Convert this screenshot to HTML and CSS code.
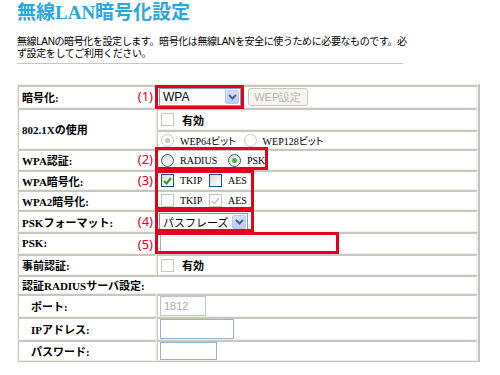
FILE: index.html
```html
<!DOCTYPE html>
<html lang="ja">
<head>
    <meta charset="UTF-8">
    <meta name="viewport" content="width=device-width, initial-scale=1.0">
    <title>無線LAN暗号化設定</title>
    <link rel="stylesheet" href="styles.css">
</head>
<body>
    <h1 class="title">無線LAN暗号化設定</h1>
    <p class="intro">無線LANの暗号化を設定します。暗号化は無線LANを安全に使うために必要なものです。必<br>ず設定をしてご利用ください。</p>
    <div class="rule"></div>

    <div class="form-wrap">
        <table class="settings">
            <colgroup>
                <col class="col-label">
                <col>
            </colgroup>
            <tr class="h23">
                <th>暗号化: <span class="num">(1)</span></th>
                <td>
                    <span class="select sel-wpa"><span class="select-text">WPA</span><span class="select-btn"><svg width="9" height="6" viewBox="0 0 9 6"><path d="M1 1 L4.5 4.5 L8 1" fill="none" stroke="#4d6185" stroke-width="2"/></svg></span></span>
                    <span class="btn-off">WEP設定</span>
                </td>
            </tr>
            <tr class="h22">
                <th rowspan="2">802.1Xの使用</th>
                <td><span class="chk off"></span><b class="opt-b">有効</b></td>
            </tr>
            <tr class="h19">
                <td>
                    <span class="radio off on"></span><span class="opt opt-w">WEP64ビット</span>
                    <span class="radio off"></span><span class="opt">WEP128ビット</span>
                </td>
            </tr>
            <tr class="h21">
                <th>WPA認証: <span class="num">(2)</span></th>
                <td>
                    <span class="radio"></span><span class="opt">RADIUS</span>
                    <span class="radio on"></span><span class="opt">PSK</span>
                </td>
            </tr>
            <tr class="h20">
                <th>WPA暗号化: <span class="num">(3)</span></th>
                <td>
                    <span class="chk"><svg width="9" height="8" viewBox="0 0 9 8"><path d="M1 4 L3.5 6.5 L8 1" fill="none" stroke="#21a121" stroke-width="2"/></svg></span><span class="opt opt-s">TKIP</span>
                    <span class="chk"></span><span class="opt opt-s">AES</span>
                </td>
            </tr>
            <tr class="h20">
                <th>WPA2暗号化:</th>
                <td>
                    <span class="chk off"></span><span class="opt opt-s">TKIP</span>
                    <span class="chk off"><svg width="9" height="8" viewBox="0 0 9 8"><path d="M1 4 L3.5 6.5 L8 1" fill="none" stroke="#c8c7bc" stroke-width="1.5"/></svg></span><span class="opt opt-s">AES</span>
                </td>
            </tr>
            <tr class="h22">
                <th>PSKフォーマット: <span class="num">(4)</span></th>
                <td>
                    <span class="select sel-psk"><span class="select-text jp">パスフレーズ</span><span class="select-btn"><svg width="9" height="6" viewBox="0 0 9 6"><path d="M1 1 L4.5 4.5 L8 1" fill="none" stroke="#4d6185" stroke-width="2"/></svg></span></span>
                </td>
            </tr>
            <tr class="h22">
                <th>PSK: <span class="num">(5)</span></th>
                <td><input class="field psk" type="text"></td>
            </tr>
            <tr class="h21">
                <th>事前認証:</th>
                <td><span class="chk off"></span><b class="opt-b">有効</b></td>
            </tr>
            <tr class="h17">
                <th colspan="2">認証RADIUSサーバ設定:</th>
            </tr>
            <tr class="h23">
                <th class="sub">ポート:</th>
                <td><input class="field port" type="text" value="1812" disabled></td>
            </tr>
            <tr class="h23">
                <th class="sub">IPアドレス:</th>
                <td><input class="field ip" type="text"></td>
            </tr>
            <tr class="h21">
                <th class="sub">パスワード:</th>
                <td><input class="field pass" type="password"></td>
            </tr>
        </table>

        <!-- 注釈の赤枠 -->
        <div class="mark m1"></div>
        <div class="mark m2"></div>
        <div class="mark m3"></div>
        <div class="mark m4"></div>
        <div class="mark m5"></div>
    </div>
</body>
</html>
```

FILE: styles.css
```css
body {
    margin: 0;
    padding: 0 17px;
    font-family: "Liberation Serif", "Noto Sans CJK JP", serif;
    color: #000;
    background: #fff;
}
.title {
    margin: 0;
    padding-top: 1px;
    font-size: 19px;
    line-height: 24px;
    font-weight: bold;
    color: #2aa7de;
}
.intro {
    margin: 11px 0 0;
    font-family: "Liberation Sans", "Noto Sans CJK JP", sans-serif;
    font-size: 10px;
    line-height: 12px;
    letter-spacing: -0.4px;
}
.rule {
    width: 386px;
    height: 1px;
    margin-top: 3px;
    background: #c8c8c0;
}
.form-wrap {
    position: relative;
    width: 463px;
    margin-top: 20px;
}
.settings {
    width: 463px;
    table-layout: fixed;
    border-collapse: separate;
    border-spacing: 0;
    border: 1px solid;
    border-color: #f1f0e9 #c4c3bb #c4c3bb #f1f0e9;
    border-right-width: 2px;
}
.col-label {
    width: 139px;
}
.settings th,
.settings td {
    padding: 0;
    border-top: 2px solid #c8c7bf;
    border-bottom: 1px solid #f1f0e9;
    border-left: 1px solid #c8c7bf;
    border-right: 2px solid #f1f0e9;
    background: #fff;
    vertical-align: middle;
    font-size: 11px;
    white-space: nowrap;
}
.settings th {
    padding-left: 3px;
    text-align: left;
    font-weight: bold;
}
.settings td {
    padding-left: 1px;
}
.settings th.sub {
    padding-left: 12px;
}
.h17 { height: 17px; }
.h19 { height: 19px; }
.h20 { height: 20px; }
.h21 { height: 21px; }
.h22 { height: 22px; }
.h23 { height: 23px; }

.num {
    float: right;
    margin-right: 2px;
    font-family: "Noto Sans", sans-serif;
    font-weight: normal;
    font-size: 13px;
    line-height: 14px;
    color: #e50020;
}

/* セレクト */
.select {
    display: inline-flex;
    align-items: stretch;
    height: 18px;
    box-sizing: border-box;
    border: 1px solid #7f9db9;
    background: #fff;
    vertical-align: middle;
}
.sel-wpa { width: 82px; }
.sel-psk { width: 89px; }
.select-text {
    flex: 1;
    padding-left: 3px;
    font-family: "Liberation Sans", sans-serif;
    font-size: 12px;
    line-height: 16px;
}
.select-text.jp {
    font-family: "Noto Sans CJK JP", sans-serif;
    font-size: 11px;
}
.select-btn {
    display: flex;
    align-items: center;
    justify-content: center;
    width: 14px;
    margin: 1px;
    border-radius: 2px;
    background: linear-gradient(#d6e2fd, #b6cbf8);
    border: 1px solid #b8c9ef;
    box-sizing: border-box;
}
.btn-off {
    display: inline-block;
    height: 18px;
    width: 60px;
    margin-left: 4px;
    box-sizing: border-box;
    border: 1px solid #cac8bd;
    border-radius: 3px;
    background: #f5f4ef;
    color: #b5b4ab;
    font-family: "Liberation Sans", sans-serif;
    font-size: 11px;
    line-height: 16px;
    text-align: center;
    vertical-align: middle;
}

/* チェックボックスとラジオ */
.chk,
.radio {
    display: inline-flex;
    align-items: center;
    justify-content: center;
    width: 11px;
    height: 11px;
    margin-left: 2px;
    border: 1px solid #1c5180;
    background: linear-gradient(135deg, #dcdcd7, #fff);
    vertical-align: middle;
}
.radio {
    border-radius: 50%;
    border-color: #2e5c8a;
}
.radio.on::after {
    content: "";
    width: 5px;
    height: 5px;
    border-radius: 50%;
    background: #3fbe3f;
}
.chk.off,
.radio.off {
    border-color: #cac8bb;
    background: #fff;
}
.radio.off.on::after {
    background: #cac8bb;
}
.opt {
    margin: 0 6px 0 6px;
    font-size: 10px;
    font-feature-settings: "palt";
    vertical-align: middle;
}
.opt-s {
    margin-right: 2px;
}
.opt-w {
    margin-right: 3px;
}
.opt-b {
    margin-left: 8px;
    font-family: "Noto Sans CJK JP", sans-serif;
    font-size: 11px;
    vertical-align: middle;
}

/* 入力欄 */
.field {
    height: 20px;
    box-sizing: border-box;
    margin: 0 0 0 1px;
    padding: 0 3px;
    border: 1px solid #9db1cb;
    font-family: "Liberation Sans", sans-serif;
    font-size: 11px;
    vertical-align: middle;
}
.field.psk { width: 177px; height: 19px; }
.field.port { width: 46px; color: #acacac; background: #fff; border-color: #b9c6d6; }
.field.ip { width: 74px; }
.field.pass { width: 57px; height: 18px; }

/* 赤枠 */
.mark {
    position: absolute;
    border: 3px solid #e50020;
    box-sizing: border-box;
}
.m1 { left: 138px; top: 1px; width: 89px; height: 24px; }
.m2 { left: 138px; top: 63px; width: 113px; height: 23px; }
.m3 { left: 138px; top: 86px; width: 99px; height: 40px; }
.m4 { left: 138px; top: 125px; width: 99px; height: 23px; }
.m5 { left: 138px; top: 148px; width: 184px; height: 22px; }
```
